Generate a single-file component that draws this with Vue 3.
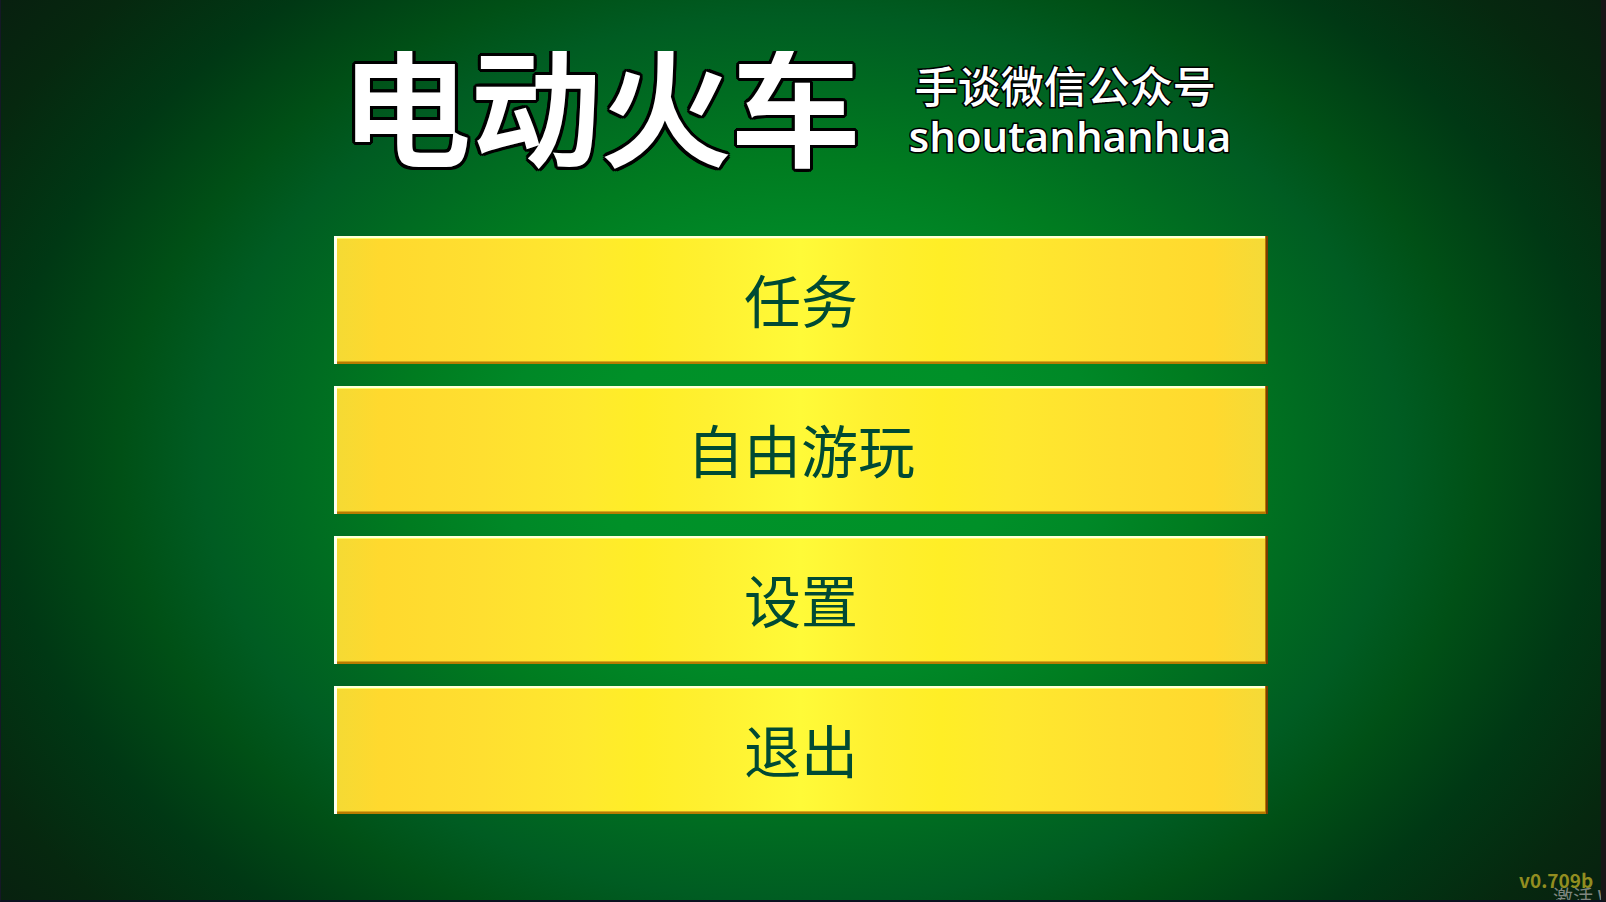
<script setup>
const items = ['任务', '自由游玩', '设置', '退出']
</script>

<template>
  <div class="screen">
    <main class="menu">
      <header class="header">
        <h1 class="title">电动火车</h1>
        <p class="credit">
          <span class="source">手谈微信公众号</span>
          <span class="account">shoutanhanhua</span>
        </p>
      </header>
      <nav class="list">
        <button v-for="item in items" :key="item" type="button" class="item">{{ item }}</button>
      </nav>
    </main>
    <footer class="corner">
      <span class="version">v0.709b</span>
      <span class="notice">激活 W</span>
    </footer>
  </div>
</template>

<style>
body {
  margin: 0;
  background: #191617;
}
</style>

<style scoped>
.screen {
  position: relative;
  box-sizing: border-box;
  min-height: 100vh;
  overflow: hidden;
  border-style: solid;
  border-width: 0 5px 2px 1px;
  border-color: #191617 #191617 #0b1220 #151826;
  background: radial-gradient(ellipse 1000px 740px at 50% 51%, #009329 0%, #009028 20%, #008827 30%, #007c20 40%, #006c21 50%, #005c22 60%, #005016 68%, #003814 80%, #06280f 92%, #08200f 101%);
  font-family: "Noto Sans CJK SC", sans-serif;
}

.menu {
  width: 58.4%;
  margin: 0 auto;
}

.header {
  display: flex;
  gap: 42px;
  padding: 51px 0 0 3px;
  height: 236px;
  box-sizing: border-box;
}

.title {
  margin: 0;
  padding: 0 6px 0 4px;
  height: 126px;
  overflow: hidden;
  font-size: 130px;
  line-height: 97px;
  font-weight: 500;
  white-space: nowrap;
  color: #fff;
  -webkit-text-stroke: 2px #fff;
  text-shadow:
    4px 0 #000, -4px 0 #000, 0 4px #000, 0 -4px #000,
    3px 3px #000, -3px 3px #000, 3px -3px #000, -3px -3px #000,
    4px 2px #000, -4px 2px #000, 4px -2px #000, -4px -2px #000,
    2px 4px #000, -2px 4px #000, 2px -4px #000, -2px -4px #000;
}

.credit {
  display: flex;
  flex-direction: column;
  margin: 0;
  padding-top: 8px;
  font-size: 43px;
  line-height: 50px;
  font-weight: 500;
  white-space: nowrap;
  color: #fff;
  -webkit-text-stroke: 3px #000;
  paint-order: stroke fill;
}

.source {
  padding-left: 6px;
}

.account {
  font-family: "Open Sans", sans-serif;
  font-size: 42px;
  line-height: 54px;
  font-weight: 600;
}

.list {
  display: flex;
  flex-direction: column;
  gap: 22px;
}

.item {
  height: 128px;
  padding: 0 0 4px;
  border: 0;
  background: linear-gradient(90deg, #f4da34 0%, #ffd92e 5%, #ffdf30 16%, #ffe92e 27%, #ffee26 33%, #fff030 40%, #fffa38 50%, #fff030 58%, #ffee26 65%, #ffe92e 72%, #ffdf30 84%, #ffd92e 94%, #f4da38 100%);
  box-shadow:
    inset 3px 0 #fffff0,
    inset -2px 0 #7a3c00,
    inset -3px 0 #b87800,
    inset 0 2px #ffffd8,
    inset 0 3px #ffff60,
    inset 0 -2px #b97c00,
    inset 0 -3px #d8a81c;
  font-family: inherit;
  font-size: 57px;
  line-height: 72px;
  color: #004a34;
}

.corner {
  position: absolute;
  right: 0;
  bottom: 0;
  height: 32px;
  width: 82px;
  overflow: hidden;
}

.version {
  display: block;
  font-size: 19px;
  line-height: 24px;
  font-weight: 700;
  color: #928e20;
}

.notice {
  display: block;
  padding-left: 34px;
  font-size: 20px;
  line-height: 10px;
  font-weight: 400;
  white-space: nowrap;
  color: #7f867f;
}
</style>
